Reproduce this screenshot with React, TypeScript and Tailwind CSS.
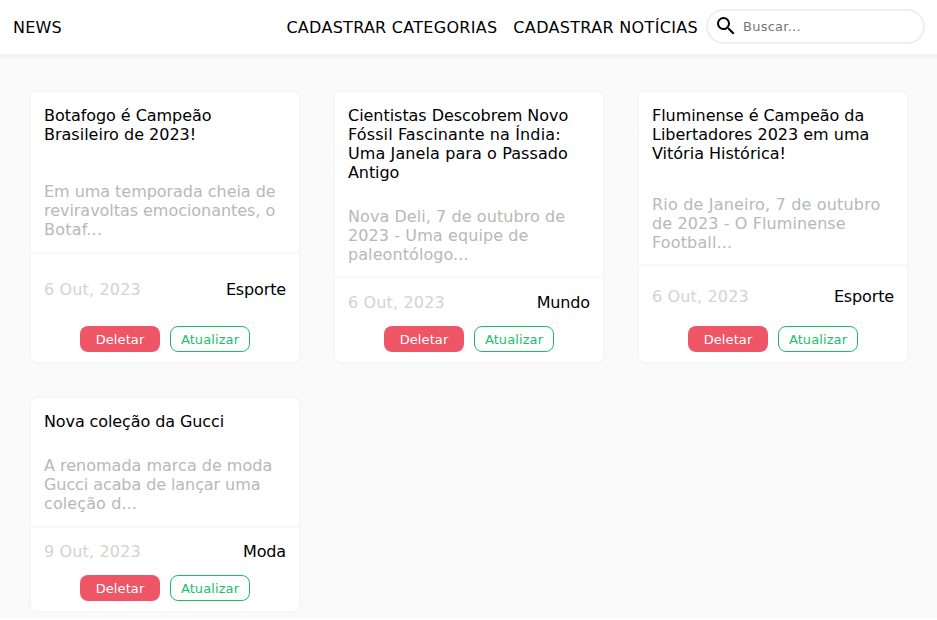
import React from "react";
import { MdSearch } from "react-icons/md";

type Line = [text: string, tracking: string];

type News = {
  title: Line[];
  body: Line[];
  date: string;
  category: string;
  summaryHeight: string;
  cardHeight: string;
};

const news: News[] = [
  {
    title: [
      ["Botafogo é Campeão", "tracking-[-0.05px]"],
      ["Brasileiro de 2023!", "tracking-normal"],
    ],
    body: [
      ["Em uma temporada cheia de", "tracking-[-0.04px]"],
      ["reviravoltas emocionantes, o", "tracking-[-0.04px]"],
      ["Botaf...", "tracking-[0.2px]"],
    ],
    date: "6 Out, 2023",
    category: "Esporte",
    summaryHeight: "h-[162px]",
    cardHeight: "h-[274px]",
  },
  {
    title: [
      ["Cientistas Descobrem Novo", "tracking-[-0.04px]"],
      ["Fóssil Fascinante na Índia:", "tracking-[0.13px]"],
      ["Uma Janela para o Passado", "tracking-[0.1px]"],
      ["Antigo", "tracking-[-0.1px]"],
    ],
    body: [
      ["Nova Deli, 7 de outubro de", "tracking-[0.07px]"],
      ["2023 - Uma equipe de", "tracking-[0.1px]"],
      ["paleontólogo...", "tracking-[0.08px]"],
    ],
    date: "6 Out, 2023",
    category: "Mundo",
    summaryHeight: "h-[187px]",
    cardHeight: "h-[274px]",
  },
  {
    title: [
      ["Fluminense é Campeão da", "tracking-[-0.05px]"],
      ["Libertadores 2023 em uma", "tracking-normal"],
      ["Vitória Histórica!", "tracking-normal"],
    ],
    body: [
      ["Rio de Janeiro, 7 de outubro", "tracking-[0.18px]"],
      ["de 2023 - O Fluminense", "tracking-[0.1px]"],
      ["Football...", "tracking-[0.15px]"],
    ],
    date: "6 Out, 2023",
    category: "Esporte",
    summaryHeight: "h-[175px]",
    cardHeight: "h-[274px]",
  },
  {
    title: [["Nova coleção da Gucci", "tracking-[-0.1px]"]],
    body: [
      ["A renomada marca de moda", "tracking-normal"],
      ["Gucci acaba de lançar uma", "tracking-[-0.08px]"],
      ["coleção d...", "tracking-[0.1px]"],
    ],
    date: "9 Out, 2023",
    category: "Moda",
    summaryHeight: "h-[130px]",
    cardHeight: "h-[217px]",
  },
];

function Lines({ lines }: { lines: Line[] }) {
  return (
    <>
      {lines.map(([text, tracking]) => (
        <span key={text} className={`block whitespace-nowrap ${tracking}`}>
          {text}
        </span>
      ))}
    </>
  );
}

function Card({ item }: { item: News }) {
  return (
    <article className={`flex w-[272px] flex-col rounded-[8px] border-2 border-[#f6f6f6] bg-white ${item.cardHeight}`}>
      <div className={`flex shrink-0 flex-col justify-between border-b-3 border-[#f9f9f9] px-[13px] pt-[14px] pb-[12px] ${item.summaryHeight}`}>
        <h2>
          <Lines lines={item.title} />
        </h2>
        <p className="text-[#b8b8b8]">
          <Lines lines={item.body} />
        </p>
      </div>
      <div className="flex flex-1 items-center justify-between px-[13px] pb-px">
        <span className="tracking-[0.15px] text-[#d3d3d3]">{item.date}</span>
        <span className="tracking-[-0.14px]">{item.category}</span>
      </div>
      <div className="flex justify-center gap-[10px] pb-[10px] text-[13px]">
        <button className="h-[26px] w-[80px] rounded-[8px] bg-[#ee5566] tracking-[0.1px] text-white">Deletar</button>
        <button className="h-[26px] w-[80px] rounded-[8px] border border-[#19be6b] tracking-[0.1px] text-[#19be6b]">Atualizar</button>
      </div>
    </article>
  );
}

export default function App() {
  return (
    <div className="h-[620px] w-[937px] overflow-hidden bg-white font-['Verdana','DejaVu_Sans',sans-serif] text-[16px] leading-[19px] text-black">
      <header className="flex h-[58px] items-center border-b-4 border-[#f2f2f2] pl-[13px]">
        <a className="flex-1 tracking-[0.2px]">NEWS</a>
        <a className="mr-4 tracking-[0.28px]">CADASTRAR CATEGORIAS</a>
        <a className="mr-2 tracking-[0.33px]">CADASTRAR NOTÍCIAS</a>
        <label className="mr-3 mb-px flex h-[35px] w-[219px] items-center gap-[5px] rounded-full border-2 border-[#efefef] pr-4 pl-[6px]">
          <MdSearch className="mb-px size-6 shrink-0" />
          <input
            type="text"
            placeholder="Buscar..."
            className="w-full min-w-0 text-[13px] tracking-[0.25px] outline-none placeholder:text-[#757575]"
          />
        </label>
      </header>
      <main className="grid h-[560px] grid-cols-[repeat(3,272px)] content-start gap-8 bg-[#fafafa] pt-8 pl-[29px]">
        {news.map((item) => (
          <Card key={item.title[0][0]} item={item} />
        ))}
      </main>
    </div>
  );
}
